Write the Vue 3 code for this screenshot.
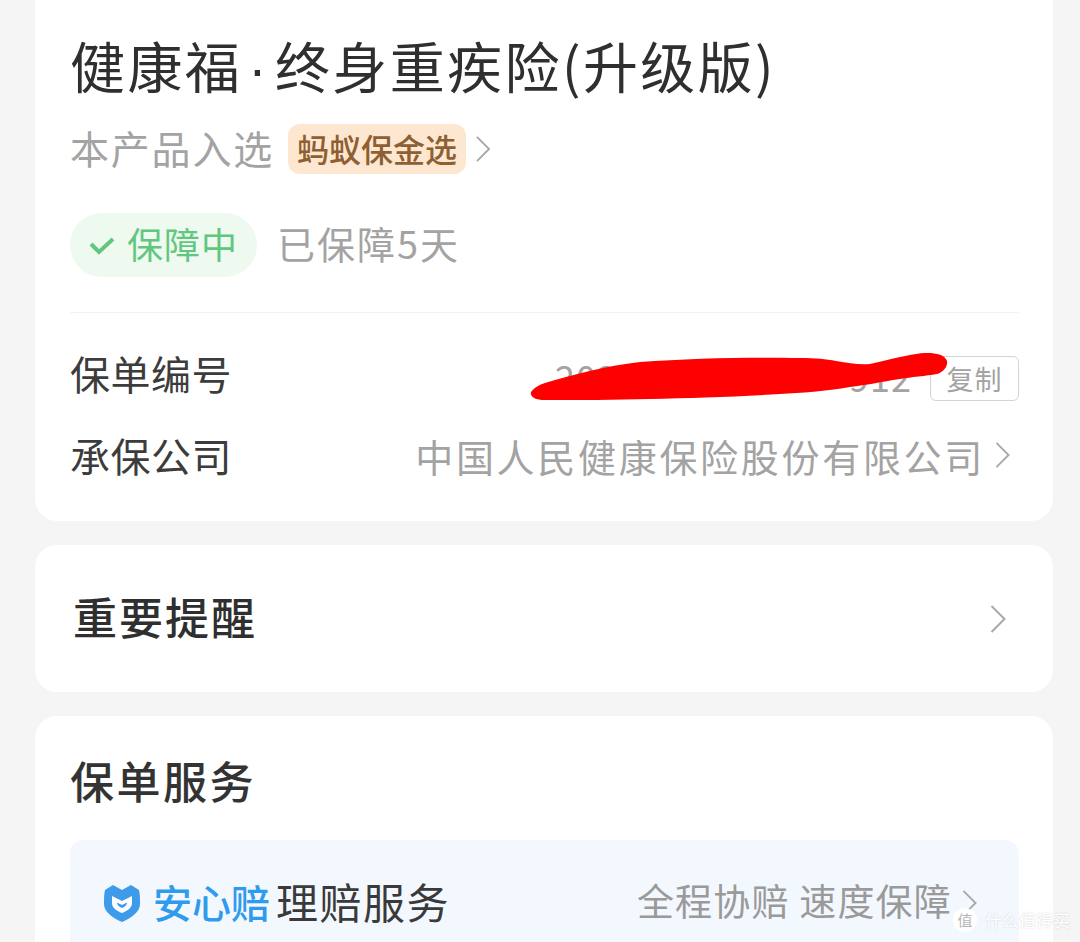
<template>
  <div class="page">
    <!-- 保单信息 -->
    <section class="card card-main">
      <h1 class="title">健康福<span class="dot">·</span>终身重疾险(升级版)</h1>
      <div class="pick">
        <span class="pick-label">本产品入选</span>
        <span class="pick-tag">蚂蚁保金选</span>
        <svg class="arrow arrow-pick" viewBox="0 0 16 30"><path d="M1.5 2 L14.5 15 L1.5 28" /></svg>
      </div>
      <div class="status">
        <span class="status-pill">
          <svg class="check" viewBox="0 0 26 20"><path d="M2 9 L10 17 L24 4" /></svg>
          <span class="status-text">保障中</span>
        </span>
        <span class="status-days">已保障5天</span>
      </div>
      <div class="info">
        <div class="info-row row-no">
          <span class="info-label">保单编号</span>
          <div class="info-value">
            <span class="no-wrap">
              <span class="no-text">2025</span>
              <span class="no-text">912</span>
              <!-- 涂抹遮挡 -->
              <svg class="scribble" viewBox="0 0 420 52">
                <path d="M0 42 C4 37 8 35 14 33 C40 25 75 16 109 12 C160 8 220 7 269 8 C285 8 295 9 305 11 C318 13 328 15 339 14 C350 12 358 9 369 7 C380 5 388 3 396 3 C406 3 414 5 416 11 C417 16 413 22 406 24 C395 26 380 27 369 29 C350 32 335 35 319 37 C295 41 270 43 249 44 C205 47 160 48 119 49 C85 50 45 50 14 50 C4 50 -1 47 0 42 Z" />
              </svg>
            </span>
            <span class="copy">复制</span>
          </div>
        </div>
        <div class="info-row row-company">
          <span class="info-label">承保公司</span>
          <div class="info-value">
            <span class="company">中国人民健康保险股份有限公司</span>
            <svg class="arrow arrow-company" viewBox="0 0 16 30"><path d="M1.5 2 L14.5 15 L1.5 28" /></svg>
          </div>
        </div>
      </div>
    </section>

    <!-- 重要提醒 -->
    <section class="card card-notice">
      <span class="notice-text">重要提醒</span>
      <svg class="arrow arrow-notice" viewBox="0 0 16 30"><path d="M1.5 2 L14.5 15 L1.5 28" /></svg>
    </section>

    <!-- 保单服务 -->
    <section class="card card-service">
      <h2 class="service-title">保单服务</h2>
      <div class="claim">
        <div class="claim-left">
          <svg class="shield" viewBox="0 0 36 38">
            <path class="shield-body" d="M1 6 L9 1 L18 6 L27 1 L35 6 C36 10 36 15 36 20 C36 28 27 34 18 38 C9 34 0 28 0 20 C0 15 0 10 1 6 Z" />
            <path class="shield-mark" d="M8 12 L18 17 L28 12 V19 C28 24 23 27 18 29 C13 27 8 24 8 19 Z" />
            <path class="shield-body" d="M13 18.5 L18 21 L23 18.5 C23 21 21 23 18 24 C15 23 13 21 13 18.5 Z" />
          </svg>
          <span class="claim-brand">安心赔</span>
          <span class="claim-name">理赔服务</span>
        </div>
        <div class="claim-right">
          <span class="claim-desc">全程协赔 速度保障</span>
          <svg class="arrow arrow-claim" viewBox="0 0 16 30"><path d="M1.5 2 L14.5 15 L1.5 28" /></svg>
        </div>
      </div>
    </section>

    <!-- 水印 -->
    <div class="watermark">
      <span class="wm-logo">值</span>
      <span class="wm-text">什么值得买</span>
    </div>
  </div>
</template>

<script setup>
</script>

<style>
html, body {
  margin: 0;
  background: #f5f5f5;
}
</style>

<style scoped>
.page {
  position: relative;
  height: 942px;
  overflow: hidden;
  padding: 0 27px 0 35px;
  background: #f5f5f5;
  font-family: "Noto Sans CJK SC", "Liberation Sans", sans-serif;
  box-sizing: border-box;
}

.card {
  background: #fff;
  border-radius: 22px;
  box-sizing: border-box;
}

.card-main {
  height: 541px;
  margin-top: -20px;
  padding: 50px 34px 0 35px;
}

.title {
  margin: 0;
  font-size: 55px;
  line-height: 68px;
  font-weight: 400;
  color: #2f2f2f;
  white-space: nowrap;
  letter-spacing: 2.4px;
}

.dot {
  margin: 0 6px;
  font-family: "Liberation Sans", sans-serif;
}

.pick {
  display: flex;
  align-items: center;
  height: 50px;
  margin-top: 21px;
}

.pick-label {
  padding-bottom: 5px;
  font-size: 39px;
  color: #a3a3a3;
  letter-spacing: 1.8px;
}

.pick-tag {
  margin-left: 14px;
  width: 178px;
  height: 50px;
  line-height: 48px;
  text-align: center;
  border-radius: 12px;
  background: #fde7d0;
  color: #8d5f33;
  font-size: 32px;
  font-weight: 500;
  white-space: nowrap;
}

.arrow {
  display: block;
  fill: none;
  stroke: #a8a8a8;
  stroke-width: 2;
  flex: none;
}

.arrow-pick {
  width: 16px;
  height: 28px;
  margin-left: 9px;
}

.status {
  display: flex;
  align-items: center;
  margin-top: 39px;
  height: 64px;
}

.status-pill {
  display: flex;
  align-items: center;
  width: 187px;
  height: 64px;
  border-radius: 32px;
  background: #eef9f0;
  color: #62c77e;
  font-size: 36px;
  letter-spacing: 1px;
  box-sizing: border-box;
  padding-left: 19px;
  white-space: nowrap;
}

.status-text {
  padding-bottom: 4px;
}

.check {
  width: 26px;
  height: 20px;
  margin-right: 12px;
  fill: none;
  stroke: #62c77e;
  stroke-width: 4;
}

.status-days {
  margin-left: 20px;
  padding-bottom: 5px;
  font-size: 38px;
  color: #a3a3a3;
  letter-spacing: 2px;
}

.info {
  margin-top: 35px;
  border-top: 1px solid #f2f2f2;
}

.info-row {
  display: flex;
  align-items: center;
  justify-content: space-between;
}

.row-no {
  height: 82px;
  margin-top: 19px;
}

.row-company {
  height: 82px;
}

.info-label {
  font-size: 40px;
  color: #3c3c3c;
  letter-spacing: 0.5px;
}

.info-value {
  display: flex;
  align-items: center;
}

.no-wrap {
  position: relative;
  display: flex;
  justify-content: space-between;
  width: 357px;
  margin-right: 18px;
  padding-top: 6px;
}

.no-text {
  font-size: 36px;
  color: #a3a3a3;
  white-space: nowrap;
  line-height: 44px;
  letter-spacing: 1px;
}

.scribble {
  position: absolute;
  left: -24px;
  top: 2px;
  width: 420px;
  height: 52px;
  fill: #fe0000;
  overflow: visible;
}

.copy {
  width: 89px;
  height: 45px;
  margin-top: 10px;
  line-height: 43px;
  text-align: center;
  font-size: 27px;
  color: #a3a3a3;
  border: 1.5px solid #d4d4d4;
  border-radius: 6px;
  box-sizing: border-box;
  letter-spacing: 1px;
}

.company {
  font-size: 38px;
  color: #a3a3a3;
  letter-spacing: 2.7px;
  white-space: nowrap;
}

.arrow-company {
  width: 15px;
  height: 28px;
  margin: 0 9px 0 10px;
}

.card-notice {
  display: flex;
  align-items: center;
  justify-content: space-between;
  height: 147px;
  margin-top: 24px;
  padding: 0 47px 0 38px;
}

.notice-text {
  padding-bottom: 6px;
  font-size: 44px;
  font-weight: 500;
  color: #2f2f2f;
  letter-spacing: 2px;
}

.arrow-notice {
  width: 16px;
  height: 30px;
}

.card-service {
  height: 300px;
  margin-top: 24px;
  padding: 34px 34px 0 35px;
}

.service-title {
  margin: 0;
  font-size: 44px;
  font-weight: 500;
  line-height: 60px;
  color: #333;
  letter-spacing: 2.5px;
}

.claim {
  display: flex;
  align-items: center;
  justify-content: space-between;
  height: 126px;
  margin-top: 30px;
  padding: 0 42px 0 34px;
  background: #f3f8fe;
  border-radius: 14px;
}

.claim-left,
.claim-right {
  display: flex;
  align-items: center;
}

.shield {
  width: 36px;
  height: 38px;
  margin-right: 13px;
}

.shield-body {
  fill: #3d9be9;
}

.shield-mark {
  fill: #fff;
}

.claim-brand {
  padding-bottom: 5px;
  font-size: 39px;
  font-weight: 500;
  color: #2f9bec;
}

.claim-name {
  margin-left: 6px;
  padding-bottom: 5px;
  font-size: 42px;
  color: #3a3a3a;
  letter-spacing: 1.5px;
}

.claim-desc {
  padding-bottom: 7px;
  font-size: 37px;
  color: #9a9a9a;
  letter-spacing: 1.2px;
  white-space: pre;
}

.arrow-claim {
  width: 15px;
  height: 28px;
  margin-left: 10px;
}

.watermark {
  position: absolute;
  right: 10px;
  bottom: 10px;
  display: flex;
  align-items: center;
  color: #fff;
  text-shadow: 0 0 2px rgba(130, 130, 130, 0.35);
}

.wm-logo {
  width: 24px;
  height: 24px;
  line-height: 24px;
  text-align: center;
  border-radius: 50%;
  background: #fff;
  color: #b5b5b5;
  font-size: 15px;
  text-shadow: none;
}

.wm-text {
  margin-left: 8px;
  font-size: 17px;
}
</style>
